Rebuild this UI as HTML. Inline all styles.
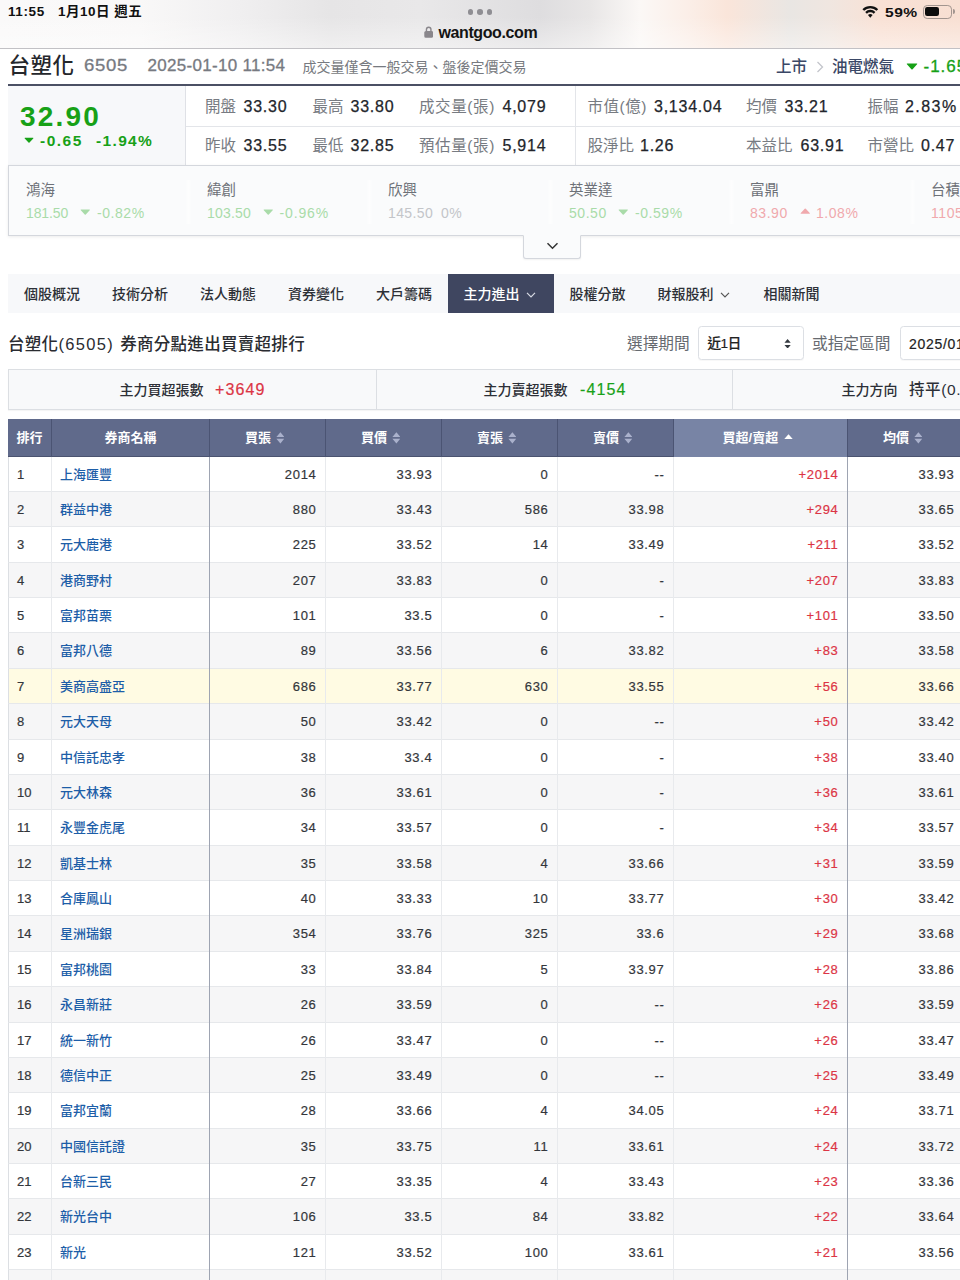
<!DOCTYPE html>
<html lang="zh-Hant"><head><meta charset="utf-8"><title>台塑化(6505) 券商分點進出買賣超排行</title>
<style>
*{box-sizing:border-box;margin:0;padding:0}
html,body{width:960px;height:1280px;overflow:hidden;background:#fff}
body{font-family:"Liberation Sans","Noto Sans CJK TC",sans-serif;color:#333;-webkit-font-smoothing:antialiased}
#page{position:relative;width:960px;height:1280px;overflow:hidden;background:#fff}
a{color:inherit;text-decoration:none}
.abs{position:absolute;white-space:nowrap;line-height:1}
/* status / browser bar */
.sbar{position:absolute;left:0;top:0;width:960px;height:48.5px;border-bottom:1px solid #c2c1c5;
 background:
  linear-gradient(to bottom,rgba(255,255,255,0) 0%,rgba(255,255,255,0) 35%,rgba(255,255,255,.4) 100%),
  linear-gradient(to right,#faf9f9 0px,#f9f8f8 140px,#f0eff0 240px,#e6e5e6 330px,#e9e8e9 420px,#dedddf 540px,#e8e6e6 590px,#fbf8f6 640px,#fbeee7 690px,#fae5da 727px,#e9e6e3 790px,#f0e6e0 830px,#f9e1d5 880px,#f8dfd2 960px)}
.sbar .t{font-weight:bold;color:#111;font-size:13.5px}
.dots{position:absolute;left:467.5px;top:9px;width:25px;height:6px}
.dots i{position:absolute;top:0;width:5.6px;height:5.6px;border-radius:50%;background:#8f8e93}
/* title row */
.trow{position:absolute;left:0;top:49px;width:960px;height:37px;background:#fff}
.darkline{position:absolute;left:8px;top:84px;width:952px;height:2px;background:#4b5064}
.pricebox{position:absolute;left:8px;top:86px;width:178px;height:79px;background:#f7f8fa;border-right:1px solid #dfe1e6}
.stats{position:absolute;left:186px;top:86px;width:774px;height:79px;background:#fff}
.hline{position:absolute;height:1px;background:#e3e5e9}
.vline{position:absolute;width:1px;background:#e3e5e9}
.lab{color:#777b82;font-size:15.5px}
.val{color:#22252b;font-size:16px;letter-spacing:.75px;-webkit-text-stroke:.25px #22252b}
.g{color:#17a117}
.r{color:#dc3545}
/* related */
.rel{position:absolute;left:8px;top:165px;width:960px;height:71px;background:#fafbfc;border:1px solid #d4d7dd;border-right:0;box-shadow:0 1px 3px rgba(0,0,0,.08)}
.rel .n{color:#6d7178;font-size:14.5px}
.rel .p{font-size:14px;letter-spacing:.55px}
.lg{color:#a9dba9}
.lr{color:#f0a9ad}
.lgray{color:#c3c5c9}
.exp{position:absolute;left:523px;top:235px;width:58px;height:24px;background:#fafbfc;border:1px solid #d4d7dd;border-top:1px solid #fafbfc;border-radius:0 0 3px 3px;box-shadow:0 1px 2px rgba(0,0,0,.06)}
/* nav */
.nav{position:absolute;left:8px;top:274px;width:952px;height:39px;background:#f7f8fa}
.nav .tab{position:absolute;top:0;height:39px;line-height:40px;font-size:14px;color:#2d3037;font-weight:500;white-space:nowrap}
.nav .act{background:#3f4660;color:#fff}
/* heading */
.h1{font-size:16.5px;color:#2a2c31;font-weight:500}
.sel{position:absolute;background:#fff;border:1px solid #dcdfe4;border-radius:3.5px;box-shadow:0 1px 1px rgba(0,0,0,.03)}
/* summary */
.sum{position:absolute;left:8px;top:368.5px;width:960px;height:41.5px;background:#f8f9fa;border:1px solid #dcdfe3;border-right:0;box-shadow:0 1px 1px rgba(0,0,0,.04)}
.sum .l{font-size:14px;color:#2d3037;font-weight:500}
.sum .v{font-size:16px;letter-spacing:1.1px;-webkit-text-stroke:.2px}
/* table header */
.thead{position:absolute;left:8px;top:419px;width:955px;height:38px;background:#606a8b;border-bottom:1px solid #4b5370}
.th{position:absolute;top:0;height:38px;line-height:37px;text-align:center;color:#fff;font-size:13px;font-weight:bold;white-space:nowrap;border-left:1px solid #4b5473}
.th.sorted{background:#7884a5}
.th:first-child{border-left:0}
.si{display:inline-block;vertical-align:middle;margin-left:4.6px;margin-top:-1.5px}
/* table body */
.tbody{position:absolute;left:0;top:0;width:960px;height:1280px;pointer-events:none}
.tr{position:absolute;left:8px;width:955px;height:35.36px;background:#fff;border-bottom:1px solid #e6e8eb;border-left:1px solid #dcdfe3}
.tr.even{background:#f6f6f7}
.tr.hl{background:#fffbe3}
.c{position:absolute;top:0;height:35.36px;line-height:35.4px;font-size:13px;color:#33363b;white-space:nowrap}
.c0{left:8px;-webkit-text-stroke:.2px}
.c1{left:51px;color:#1d5ea8;font-weight:500}
.num{text-align:right;letter-spacing:.7px;-webkit-text-stroke:.2px}
.c2{left:201px;width:106.5px}
.c3{left:317px;width:106.5px}
.c4{left:433px;width:106.5px}
.c5{left:549px;width:106.5px}
.c6{left:665px;width:164.5px}
.c7{left:839px;width:106.5px}
.c.red{color:#dc3545}
.vl{position:absolute;top:456.5px;width:1px;height:830px;background:#e8eaed}
.vl.strong{background:#9ea4b2;top:457px;height:830px}

.th.so{padding-right:5.6px}
.rel .sep{position:absolute;top:14px;width:7px;height:44px;background:linear-gradient(to right,rgba(255,255,255,0),rgba(255,255,255,.6),rgba(255,255,255,0))}

</style></head>
<body>
<div id="page">
<div class="sbar">
 <span class="abs t" style="left:8px;top:5px;letter-spacing:.6px">11:55</span>
 <span class="abs t" style="left:58px;top:5px;letter-spacing:.5px">1月10日 週五</span>
 <div class="dots"><i style="left:0"></i><i style="left:9.6px"></i><i style="left:19.2px"></i></div>
 <svg class="abs" style="left:423.5px;top:26px" width="9.4" height="12.6" viewBox="0 0 10 13"><path d="M2.6 5.2V3.6a2.4 2.4 0 0 1 4.8 0v1.6" fill="none" stroke="#8a878c" stroke-width="1.5"/><rect x="0.3" y="5" width="9.4" height="7.4" rx="1.6" fill="#8a878c"/></svg>
 <span class="abs" style="left:438.5px;top:25px;font-size:16px;font-weight:bold;color:#141414;letter-spacing:-.4px">wantgoo.com</span>
 <svg class="abs" style="left:862.3px;top:5.3px" width="16.6" height="13.1" viewBox="0 0 16 12.6"><path d="M1.21 4.81A9.6 9.6 0 0 1 14.79 4.81" fill="none" stroke="#111" stroke-width="2.3"/><path d="M3.9 7.5A5.8 5.8 0 0 1 12.1 7.5" fill="none" stroke="#111" stroke-width="2.3"/><path d="M8 12.3L5.75 9.7A3.2 3.2 0 0 1 10.25 9.7z" fill="#111"/></svg>
 <span class="abs t" style="left:884.5px;top:5.5px;font-size:13px;letter-spacing:.4px;transform:scaleX(1.2);transform-origin:left center">59%</span>
 <div class="abs" style="left:923px;top:5px;width:28.5px;height:13.5px;border:1px solid #a2958f;border-radius:4.2px"></div>
 <div class="abs" style="left:925px;top:7px;width:14.2px;height:9.4px;background:#0c0c0c;border-radius:2.2px"></div>
 <div class="abs" style="left:952.5px;top:9.3px;width:2px;height:5px;background:#a2958f;border-radius:0 2px 2px 0"></div>
</div>

<div class="trow">
 <span class="abs" style="left:8.5px;top:7px;font-size:21.5px;font-weight:500;color:#25272c;letter-spacing:.5px">台塑化</span>
 <span class="abs" style="left:83.5px;top:8px;font-size:17px;color:#777a81;letter-spacing:.6px;transform:scaleX(1.09);transform-origin:left center;-webkit-text-stroke:.3px">6505</span>
 <span class="abs" style="left:147.5px;top:8px;font-size:17px;color:#777a81;letter-spacing:.3px;-webkit-text-stroke:.3px">2025-01-10 11:54</span>
 <span class="abs" style="left:302.5px;top:10.5px;font-size:14px;color:#777a80">成交量僅含一般交易、盤後定價交易</span>
 <span class="abs" style="left:776px;top:9.5px;font-size:15.5px;color:#3a4766;font-weight:500">上市</span>
 <svg class="abs" style="left:816px;top:11.5px" width="8" height="12" viewBox="0 0 8 12"><path d="M1.5 1l5 5-5 5" fill="none" stroke="#c3c5cb" stroke-width="1.3"/></svg>
 <span class="abs" style="left:832px;top:9.5px;font-size:15.5px;color:#3a4766;font-weight:500">油電燃氣</span>
 <svg class="abs" style="left:906px;top:13.5px" width="12" height="7" viewBox="0 0 12 7"><path d="M1.2 .6h9.6q.8 0 .3.7L6.6 6.3q-.6.6-1.2 0L.9 1.3q-.5-.7.3-.7z" fill="#17a117"/></svg>
 <span class="abs g" style="left:923.5px;top:9px;font-size:17px;letter-spacing:1px;-webkit-text-stroke:.3px">-1.65%</span>
</div>
<div class="darkline"></div>

<div class="pricebox">
 <span class="abs g" style="left:12px;top:17px;font-size:28px;font-weight:bold;letter-spacing:2.2px">32.90</span>
 <svg class="abs" style="left:15.5px;top:50.5px" width="10" height="6.5" viewBox="0 0 12 7"><path d="M1.2 .6h9.6q.8 0 .3.7L6.6 6.3q-.6.6-1.2 0L.9 1.3q-.5-.7.3-.7z" fill="#17a117"/></svg>
 <span class="abs g" style="left:32px;top:46.5px;font-size:15.5px;font-weight:bold;letter-spacing:1.5px">-0.65</span>
 <span class="abs g" style="left:88px;top:46.5px;font-size:15.5px;font-weight:bold;letter-spacing:1.35px">-1.94%</span>
</div>
<div class="stats">
 <i class="hline" style="left:0;top:40px;width:774px"></i>
 <i class="vline" style="left:389px;top:0;height:79px"></i>
 <span class="abs lab" style="left:19px;top:13px">開盤</span><span class="abs val" style="left:57.5px;top:12.5px">33.30</span>
 <span class="abs lab" style="left:126.5px;top:13px">最高</span><span class="abs val" style="left:164.5px;top:12.5px">33.80</span>
 <span class="abs lab" style="left:233px;top:13px;letter-spacing:.6px">成交量(張)</span><span class="abs val" style="left:316.5px;top:12.5px">4,079</span>
 <span class="abs lab" style="left:401.5px;top:13px;letter-spacing:.5px">市值(億)</span><span class="abs val" style="left:468px;top:12.5px">3,134.04</span>
 <span class="abs lab" style="left:560px;top:13px">均價</span><span class="abs val" style="left:598.5px;top:12.5px">33.21</span>
 <span class="abs lab" style="left:681.5px;top:13px">振幅</span><span class="abs val" style="left:719px;top:12.5px;letter-spacing:1.45px">2.83%</span>
 <span class="abs lab" style="left:19px;top:52px">昨收</span><span class="abs val" style="left:57.5px;top:51.5px">33.55</span>
 <span class="abs lab" style="left:126.5px;top:52px">最低</span><span class="abs val" style="left:164.5px;top:51.5px">32.85</span>
 <span class="abs lab" style="left:233px;top:52px;letter-spacing:.6px">預估量(張)</span><span class="abs val" style="left:316.5px;top:51.5px">5,914</span>
 <span class="abs lab" style="left:401.5px;top:52px">股淨比</span><span class="abs val" style="left:454px;top:51.5px">1.26</span>
 <span class="abs lab" style="left:560px;top:52px">本益比</span><span class="abs val" style="left:614.5px;top:51.5px">63.91</span>
 <span class="abs lab" style="left:681.5px;top:52px">市營比</span><span class="abs val" style="left:735px;top:51.5px">0.47</span>
</div>

<div class="rel">
 <i class="sep" style="left:176px"></i><i class="sep" style="left:357px"></i><i class="sep" style="left:538px"></i><i class="sep" style="left:719px"></i><i class="sep" style="left:900px"></i>
 <span class="abs n" style="left:17px;top:17px">鴻海</span>
 <span class="abs p lg" style="left:17px;top:39.5px;letter-spacing:-.1px">181.50</span>
 <svg class="abs" style="left:71px;top:42.5px" width="10.5" height="6.2" viewBox="0 0 12 7"><path d="M1.2 .6h9.6q.8 0 .3.7L6.6 6.3q-.6.6-1.2 0L.9 1.3q-.5-.7.3-.7z" fill="#a9dba9"/></svg>
 <span class="abs p lg" style="left:88px;top:39.5px">-0.82%</span>

 <span class="abs n" style="left:198px;top:17px">緯創</span>
 <span class="abs p lg" style="left:198px;top:39.5px;letter-spacing:.2px">103.50</span>
 <svg class="abs" style="left:254px;top:42.5px" width="10.5" height="6.2" viewBox="0 0 12 7"><path d="M1.2 .6h9.6q.8 0 .3.7L6.6 6.3q-.6.6-1.2 0L.9 1.3q-.5-.7.3-.7z" fill="#a9dba9"/></svg>
 <span class="abs p lg" style="left:270.5px;top:39.5px;letter-spacing:.85px">-0.96%</span>

 <span class="abs n" style="left:379px;top:17px">欣興</span>
 <span class="abs p lgray" style="left:379px;top:39.5px;letter-spacing:.4px">145.50</span>
 <span class="abs p lgray" style="left:432px;top:39.5px">0%</span>

 <span class="abs n" style="left:560px;top:17px">英業達</span>
 <span class="abs p lg" style="left:560px;top:39.5px">50.50</span>
 <svg class="abs" style="left:608.5px;top:42.5px" width="10.5" height="6.2" viewBox="0 0 12 7"><path d="M1.2 .6h9.6q.8 0 .3.7L6.6 6.3q-.6.6-1.2 0L.9 1.3q-.5-.7.3-.7z" fill="#a9dba9"/></svg>
 <span class="abs p lg" style="left:626px;top:39.5px">-0.59%</span>

 <span class="abs n" style="left:741px;top:17px">富鼎</span>
 <span class="abs p lr" style="left:741px;top:39.5px">83.90</span>
 <svg class="abs" style="left:790.5px;top:42px" width="10.5" height="6.2" viewBox="0 0 12 7"><path d="M1.2 6.4h9.6q.8 0 .3-.7L6.6.7q-.6-.6-1.2 0L.9 5.7q-.5.7.3.7z" fill="#f0a9ad"/></svg>
 <span class="abs p lr" style="left:807px;top:39.5px">1.08%</span>

 <span class="abs n" style="left:922px;top:17px">台積電</span>
 <span class="abs p lr" style="left:922px;top:39.5px">1105.00</span>
</div>
<div class="exp"><svg class="abs" style="left:22px;top:5.5px" width="13" height="8" viewBox="0 0 13 8"><path d="M1.5 1.3l5 4.9 5-4.9" fill="none" stroke="#333" stroke-width="1.5"/></svg></div>

<div class="nav">
 <span class="tab" style="left:0;width:88px;padding-left:16px">個股概況</span>
 <span class="tab" style="left:88px;width:88px;padding-left:16px">技術分析</span>
 <span class="tab" style="left:176px;width:88px;padding-left:16px">法人動態</span>
 <span class="tab" style="left:264px;width:88px;padding-left:16px">資券變化</span>
 <span class="tab" style="left:352px;width:88px;padding-left:16px">大戶籌碼</span>
 <span class="tab act" style="left:439.5px;width:106px;padding-left:16px">主力進出<svg style="margin-left:6px;vertical-align:1px" width="10" height="6" viewBox="0 0 10 6"><path d="M1 .8l4 4 4-4" fill="none" stroke="#d7dae3" stroke-width="1.2"/></svg></span>
 <span class="tab" style="left:545.5px;width:88px;padding-left:16px">股權分散</span>
 <span class="tab" style="left:633.5px;width:106px;padding-left:16px">財報股利<svg style="margin-left:6px;vertical-align:1px" width="10" height="6" viewBox="0 0 10 6"><path d="M1 .8l4 4 4-4" fill="none" stroke="#555" stroke-width="1.2"/></svg></span>
 <span class="tab" style="left:739.5px;width:88px;padding-left:16px">相關新聞</span>
</div>

<span class="abs h1" style="left:8px;top:335.5px;letter-spacing:.3px">台塑化<span style="letter-spacing:1.35px">(6505) </span>券商分點進出買賣超排行</span>
<span class="abs" style="left:627px;top:335.5px;font-size:15.7px;color:#666a70">選擇期間</span>
<div class="sel" style="left:698px;top:326px;width:106px;height:34px">
 <span class="abs" style="left:8.5px;top:9.5px;font-size:13.5px;color:#222;letter-spacing:-.4px;font-weight:500;-webkit-text-stroke:.2px">近1日</span>
 <svg class="abs" style="left:84.7px;top:11.6px" width="7.2" height="9.6" viewBox="0 0 8 11"><path d="M4 0l3.6 4.2H.4z M4 11l3.6-4.2H.4z" fill="#343a40"/></svg>
</div>
<span class="abs" style="left:812px;top:335.5px;font-size:15.7px;color:#666a70">或指定區間</span>
<div class="sel" style="left:900px;top:326px;width:120px;height:34px">
 <span class="abs" style="left:8px;top:9.5px;font-size:14px;color:#222;letter-spacing:.7px;-webkit-text-stroke:.2px">2025/01/10</span>
</div>

<div class="sum">
 <i class="vline" style="left:367px;top:0;height:39px;background:#dcdfe3"></i>
 <i class="vline" style="left:723px;top:0;height:39px;background:#dcdfe3"></i>
 <span class="abs l" style="left:110.5px;top:13px">主力買超張數</span><span class="abs v r" style="left:206px;top:12.5px">+3649</span>
 <span class="abs l" style="left:474.5px;top:13px">主力賣超張數</span><span class="abs v g" style="left:571px;top:12.5px">-4154</span>
 <span class="abs l" style="left:832.5px;top:13px">主力方向</span><span class="abs" style="left:900px;top:12.5px;font-size:15.5px;color:#2d3037;letter-spacing:.6px;font-weight:500">持平(0.00)</span>
</div>

<div class="thead">
 <span class="th" style="left:0;width:43px">排行</span>
 <span class="th" style="left:43px;width:158px">券商名稱</span>
 <span class="th so" style="left:201px;width:116px">買張<svg class="si" width="8.8" height="11.6" viewBox="0 0 8 11"><path d="M4 .2l3.8 4.5H.2z M4 10.8l3.8-4.5H.2z" fill="#aab1cc"/></svg></span>
 <span class="th so" style="left:317px;width:116px">買價<svg class="si" width="8.8" height="11.6" viewBox="0 0 8 11"><path d="M4 .2l3.8 4.5H.2z M4 10.8l3.8-4.5H.2z" fill="#aab1cc"/></svg></span>
 <span class="th so" style="left:433px;width:116px">賣張<svg class="si" width="8.8" height="11.6" viewBox="0 0 8 11"><path d="M4 .2l3.8 4.5H.2z M4 10.8l3.8-4.5H.2z" fill="#aab1cc"/></svg></span>
 <span class="th so" style="left:549px;width:116px">賣價<svg class="si" width="8.8" height="11.6" viewBox="0 0 8 11"><path d="M4 .2l3.8 4.5H.2z M4 10.8l3.8-4.5H.2z" fill="#aab1cc"/></svg></span>
 <span class="th sorted so" style="left:665px;width:174px">買超/賣超<svg class="si" style="margin-left:5.6px" width="9" height="11" viewBox="0 0 9 11"><path d="M4.5 2.3l4.2 4.6H.3z" fill="#fff"/></svg></span>
 <span class="th so" style="left:839px;width:116px">均價<svg class="si" width="8.8" height="11.6" viewBox="0 0 8 11"><path d="M4 .2l3.8 4.5H.2z M4 10.8l3.8-4.5H.2z" fill="#aab1cc"/></svg></span>
</div>
<div class="tbody">
<div class="tr" style="top:456.50px"><span class="c c0">1</span><span class="c c1"><a>上海匯豐</a></span><span class="c c2 num">2014</span><span class="c c3 num">33.93</span><span class="c c4 num">0</span><span class="c c5 num">--</span><span class="c c6 num red">+2014</span><span class="c c7 num">33.93</span></div>
<div class="tr even" style="top:491.88px"><span class="c c0">2</span><span class="c c1"><a>群益中港</a></span><span class="c c2 num">880</span><span class="c c3 num">33.43</span><span class="c c4 num">586</span><span class="c c5 num">33.98</span><span class="c c6 num red">+294</span><span class="c c7 num">33.65</span></div>
<div class="tr" style="top:527.26px"><span class="c c0">3</span><span class="c c1"><a>元大鹿港</a></span><span class="c c2 num">225</span><span class="c c3 num">33.52</span><span class="c c4 num">14</span><span class="c c5 num">33.49</span><span class="c c6 num red">+211</span><span class="c c7 num">33.52</span></div>
<div class="tr even" style="top:562.64px"><span class="c c0">4</span><span class="c c1"><a>港商野村</a></span><span class="c c2 num">207</span><span class="c c3 num">33.83</span><span class="c c4 num">0</span><span class="c c5 num">-</span><span class="c c6 num red">+207</span><span class="c c7 num">33.83</span></div>
<div class="tr" style="top:598.02px"><span class="c c0">5</span><span class="c c1"><a>富邦苗栗</a></span><span class="c c2 num">101</span><span class="c c3 num">33.5</span><span class="c c4 num">0</span><span class="c c5 num">-</span><span class="c c6 num red">+101</span><span class="c c7 num">33.50</span></div>
<div class="tr even" style="top:633.40px"><span class="c c0">6</span><span class="c c1"><a>富邦八德</a></span><span class="c c2 num">89</span><span class="c c3 num">33.56</span><span class="c c4 num">6</span><span class="c c5 num">33.82</span><span class="c c6 num red">+83</span><span class="c c7 num">33.58</span></div>
<div class="tr hl" style="top:668.78px"><span class="c c0">7</span><span class="c c1"><a>美商高盛亞</a></span><span class="c c2 num">686</span><span class="c c3 num">33.77</span><span class="c c4 num">630</span><span class="c c5 num">33.55</span><span class="c c6 num red">+56</span><span class="c c7 num">33.66</span></div>
<div class="tr even" style="top:704.16px"><span class="c c0">8</span><span class="c c1"><a>元大天母</a></span><span class="c c2 num">50</span><span class="c c3 num">33.42</span><span class="c c4 num">0</span><span class="c c5 num">--</span><span class="c c6 num red">+50</span><span class="c c7 num">33.42</span></div>
<div class="tr" style="top:739.54px"><span class="c c0">9</span><span class="c c1"><a>中信託忠孝</a></span><span class="c c2 num">38</span><span class="c c3 num">33.4</span><span class="c c4 num">0</span><span class="c c5 num">-</span><span class="c c6 num red">+38</span><span class="c c7 num">33.40</span></div>
<div class="tr even" style="top:774.92px"><span class="c c0">10</span><span class="c c1"><a>元大林森</a></span><span class="c c2 num">36</span><span class="c c3 num">33.61</span><span class="c c4 num">0</span><span class="c c5 num">-</span><span class="c c6 num red">+36</span><span class="c c7 num">33.61</span></div>
<div class="tr" style="top:810.30px"><span class="c c0">11</span><span class="c c1"><a>永豐金虎尾</a></span><span class="c c2 num">34</span><span class="c c3 num">33.57</span><span class="c c4 num">0</span><span class="c c5 num">-</span><span class="c c6 num red">+34</span><span class="c c7 num">33.57</span></div>
<div class="tr even" style="top:845.68px"><span class="c c0">12</span><span class="c c1"><a>凱基士林</a></span><span class="c c2 num">35</span><span class="c c3 num">33.58</span><span class="c c4 num">4</span><span class="c c5 num">33.66</span><span class="c c6 num red">+31</span><span class="c c7 num">33.59</span></div>
<div class="tr" style="top:881.06px"><span class="c c0">13</span><span class="c c1"><a>合庫鳳山</a></span><span class="c c2 num">40</span><span class="c c3 num">33.33</span><span class="c c4 num">10</span><span class="c c5 num">33.77</span><span class="c c6 num red">+30</span><span class="c c7 num">33.42</span></div>
<div class="tr even" style="top:916.44px"><span class="c c0">14</span><span class="c c1"><a>星洲瑞銀</a></span><span class="c c2 num">354</span><span class="c c3 num">33.76</span><span class="c c4 num">325</span><span class="c c5 num">33.6</span><span class="c c6 num red">+29</span><span class="c c7 num">33.68</span></div>
<div class="tr" style="top:951.82px"><span class="c c0">15</span><span class="c c1"><a>富邦桃園</a></span><span class="c c2 num">33</span><span class="c c3 num">33.84</span><span class="c c4 num">5</span><span class="c c5 num">33.97</span><span class="c c6 num red">+28</span><span class="c c7 num">33.86</span></div>
<div class="tr even" style="top:987.20px"><span class="c c0">16</span><span class="c c1"><a>永昌新莊</a></span><span class="c c2 num">26</span><span class="c c3 num">33.59</span><span class="c c4 num">0</span><span class="c c5 num">--</span><span class="c c6 num red">+26</span><span class="c c7 num">33.59</span></div>
<div class="tr" style="top:1022.58px"><span class="c c0">17</span><span class="c c1"><a>統一新竹</a></span><span class="c c2 num">26</span><span class="c c3 num">33.47</span><span class="c c4 num">0</span><span class="c c5 num">--</span><span class="c c6 num red">+26</span><span class="c c7 num">33.47</span></div>
<div class="tr even" style="top:1057.96px"><span class="c c0">18</span><span class="c c1"><a>德信中正</a></span><span class="c c2 num">25</span><span class="c c3 num">33.49</span><span class="c c4 num">0</span><span class="c c5 num">--</span><span class="c c6 num red">+25</span><span class="c c7 num">33.49</span></div>
<div class="tr" style="top:1093.34px"><span class="c c0">19</span><span class="c c1"><a>富邦宜蘭</a></span><span class="c c2 num">28</span><span class="c c3 num">33.66</span><span class="c c4 num">4</span><span class="c c5 num">34.05</span><span class="c c6 num red">+24</span><span class="c c7 num">33.71</span></div>
<div class="tr even" style="top:1128.72px"><span class="c c0">20</span><span class="c c1"><a>中國信託證</a></span><span class="c c2 num">35</span><span class="c c3 num">33.75</span><span class="c c4 num">11</span><span class="c c5 num">33.61</span><span class="c c6 num red">+24</span><span class="c c7 num">33.72</span></div>
<div class="tr" style="top:1164.10px"><span class="c c0">21</span><span class="c c1"><a>台新三民</a></span><span class="c c2 num">27</span><span class="c c3 num">33.35</span><span class="c c4 num">4</span><span class="c c5 num">33.43</span><span class="c c6 num red">+23</span><span class="c c7 num">33.36</span></div>
<div class="tr even" style="top:1199.48px"><span class="c c0">22</span><span class="c c1"><a>新光台中</a></span><span class="c c2 num">106</span><span class="c c3 num">33.5</span><span class="c c4 num">84</span><span class="c c5 num">33.82</span><span class="c c6 num red">+22</span><span class="c c7 num">33.64</span></div>
<div class="tr" style="top:1234.86px"><span class="c c0">23</span><span class="c c1"><a>新光</a></span><span class="c c2 num">121</span><span class="c c3 num">33.52</span><span class="c c4 num">100</span><span class="c c5 num">33.61</span><span class="c c6 num red">+21</span><span class="c c7 num">33.56</span></div>
<div class="tr even" style="top:1270.24px"></div>
<i class="vl" style="left:51px"></i><i class="vl strong" style="left:209px"></i><i class="vl" style="left:325px"></i><i class="vl" style="left:441px"></i><i class="vl" style="left:557px"></i><i class="vl" style="left:673px"></i><i class="vl strong" style="left:847px"></i>
</div>
</div>
</body></html>
